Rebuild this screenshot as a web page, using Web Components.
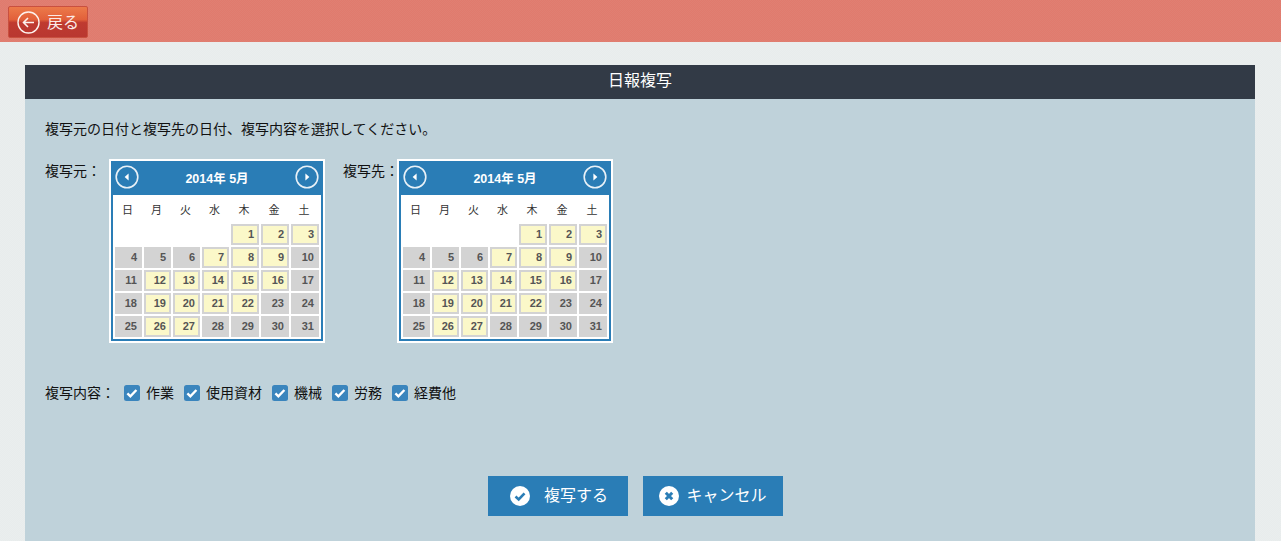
<!DOCTYPE html>
<html lang="ja">
<head>
<meta charset="utf-8">
<title>日報複写</title>
<style>
  html, body { margin: 0; padding: 0; }
  body {
    background: repeating-conic-gradient(#e8ecec 0 25%, #eaeeee 0 50%) 0 0 / 2px 2px;
    color: #111;
    font-family: "Noto Sans CJK JP", "Liberation Sans", sans-serif;
    font-size: 14px;
    height: 541px;
    overflow: hidden;
  }
</style>
</head>
<body>
<top-bar></top-bar>
<copy-panel title="日報複写">
  <p slot="lead">複写元の日付と複写先の日付、複写内容を選択してください。</p>
  <cal-field slot="cals" label="複写元：" width="64"></cal-field>
  <cal-field slot="cals" label="複写先：" width="54"></cal-field>
  <span slot="opts-label">複写内容：</span>
  <check-item slot="opts">作業</check-item>
  <check-item slot="opts">使用資材</check-item>
  <check-item slot="opts">機械</check-item>
  <check-item slot="opts">労務</check-item>
  <check-item slot="opts">経費他</check-item>
  <action-button slot="actions" icon="ok">複写する</action-button>
  <action-button slot="actions" icon="no">キャンセル</action-button>
</copy-panel>

<script>
class TopBar extends HTMLElement {
  constructor() {
    super();
    this.attachShadow({mode: 'open'}).innerHTML = `
<style>
  /* the bar has a very fine dot texture in the reference */
  :host { display: flex; align-items: center; height: 42px; background: repeating-conic-gradient(#e17a6d 0 25%, #df8073 0 50%) 0 0 / 2px 2px; padding: 2px 0 0 8px; box-sizing: border-box; }
  button {
    display: flex; align-items: center; width: 80px; height: 32px; padding: 0 0 0 8px; box-sizing: border-box;
    border: 1px solid #c9503f; border-radius: 2px; color: #fbeae6; font: inherit; font-size: 16px;
    background: linear-gradient(#ec7a4a 0%, #e2603a 42%, #bf3a30 52%, #b93730 100%);
  }
  svg { margin-right: 7px; }
  span { margin-top: -2px; }
</style>
<button>
  <svg width="23" height="23" viewBox="0 0 23 23" fill="none" stroke="#fdf2ee">
    <circle cx="11.5" cy="11.5" r="10.5" stroke-width="1.4"/>
    <path d="M17 11.5H6.5M11 7l-4.5 4.5L11 16" stroke-width="1.6"/>
  </svg><span>戻る</span>
</button>`;
  }
}

class CopyPanel extends HTMLElement {
  constructor() {
    super();
    const title = this.getAttribute('title');
    this.attachShadow({mode: 'open'}).innerHTML = `
<style>
  :host { display: block; margin: 23px 26px 0 25px; background: #bfd2da; height: 476px; }
  header { height: 34px; line-height: 29px; background: #323a46; color: #fff; text-align: center; font-size: 16px; }
  .body { padding: 20px 20px 0; }
  ::slotted(p) { margin: 0; line-height: 18px; font-size: 14px; }
  .cals { display: flex; gap: 18px; margin-top: 22px; }
  .opts { display: flex; align-items: center; margin-top: 40px; height: 20px; }
  .opts-label { width: 79px; margin-top: -3px; }
  .items { display: flex; gap: 10px; }
  .actions { display: flex; justify-content: center; gap: 15px; margin-top: 73px; padding-right: 9px; }
</style>
<header>${title}</header>
<div class="body">
  <slot name="lead"></slot>
  <div class="cals"><slot name="cals"></slot></div>
  <div class="opts">
    <div class="opts-label"><slot name="opts-label"></slot></div>
    <div class="items"><slot name="opts"></slot></div>
  </div>
  <div class="actions"><slot name="actions"></slot></div>
</div>`;
  }
}

class CalField extends HTMLElement {
  constructor() {
    super();
    this.attachShadow({mode: 'open'}).innerHTML = `
<style>
  :host { display: flex; align-items: flex-start; }
  .label { width: ${this.getAttribute('width')}px; line-height: 18px; margin-top: 2px; white-space: nowrap; }
</style>
<div class="label">${this.getAttribute('label')}</div>
<month-cal></month-cal>`;
  }
}

class MonthCal extends HTMLElement {
  constructor() {
    super();
    // 2014年5月 is fixed, the days that can be picked are the yellow ones
    const open = [1, 2, 3, 7, 8, 9, 12, 13, 14, 15, 16, 19, 20, 21, 22, 26, 27];
    const heads = ['日', '月', '火', '水', '木', '金', '土'].map(d => `<div class="dow">${d}</div>`).join('');
    let cells = '<div></div>'.repeat(4);
    for (let d = 1; d <= 31; d++) {
      cells += `<div class="day ${open.includes(d) ? 'on' : ''}">${d}</div>`;
    }
    const arrow = p => `<svg width="24" height="24" viewBox="0 0 24 24"><circle cx="12" cy="12" r="10.8" fill="none" stroke="#e8f1f7" stroke-width="1.6"/><path d="${p}" fill="#fff"/></svg>`;
    this.attachShadow({mode: 'open'}).innerHTML = `
<style>
  :host { display: block; width: 216px; height: 184px; box-sizing: border-box; border: 2px solid #fff; background: #fff; }
  .frame { height: 180px; box-sizing: border-box; border: 2px solid #2a7db6; border-top: 0; background: #fff; }
  .head { display: flex; align-items: center; justify-content: space-between; height: 34px; box-sizing: border-box; margin: 0 -2px; padding: 0 4px 2px 4px; background: #2a7db6; color: #fff; font: bold 12.5px "Liberation Sans", "Noto Sans CJK JP", sans-serif; }
  .head svg { display: block; }
  .grid { display: grid; grid-template-columns: 27px 27px 27px 27px 28px 28px 28px; column-gap: 2px; row-gap: 2px; margin-left: 2px; }
  .dow { height: 27px; line-height: 28px; padding-right: 2px; text-align: center; font-size: 11px; color: #333; }
  .grid > div:not(.dow) { height: 21px; }
  .day { box-sizing: border-box; padding-right: 5px; text-align: right; font: bold 11px/21px "Liberation Sans", sans-serif; color: #555; background: #d3d3d3; }
  .day.on { background: #fbf8c9; border: 2px solid #d3d3d3; padding-right: 3px; line-height: 17px; }
</style>
<div class="frame">
  <div class="head">${arrow('M13.6 8.6v6.8L9.6 12z')}<span>2014年 5月</span>${arrow('M10.4 8.6v6.8l4-3.4z')}</div>
  <div class="grid">${heads}${cells}</div>
</div>`;
  }
}

class CheckItem extends HTMLElement {
  constructor() {
    super();
    this.attachShadow({mode: 'open'}).innerHTML = `
<style>
  :host { display: inline-flex; align-items: center; gap: 6px; height: 20px; }
  svg { display: block; }
  span { margin-top: -3px; }
</style>
<svg width="16" height="16" viewBox="0 0 16 16">
  <rect width="16" height="16" rx="2.5" fill="#3a85bd"/>
  <path d="M3.4 8.4l3 3 6-6.4" fill="none" stroke="#fff" stroke-width="2.4"/>
</svg>
<span><slot></slot></span>`;
  }
}

class ActionButton extends HTMLElement {
  constructor() {
    super();
    const ok = this.getAttribute('icon') === 'ok';
    const glyph = ok
      ? '<path d="M5.5 10.5l3.2 3 5.8-6.2" fill="none" stroke="#2a7db6" stroke-width="2.6"/>'
      : '<path d="M6.8 6.8l6.4 6.4M13.2 6.8l-6.4 6.4" fill="none" stroke="#2a7db6" stroke-width="3"/>';
    this.attachShadow({mode: 'open'}).innerHTML = `
<style>
  :host { display: flex; align-items: center; justify-content: center; width: 140px; height: 40px; box-sizing: border-box; padding-left: ${ok ? 2 : 0}px; background: #2a7db6; color: #fff; font-size: 16px; gap: ${ok ? 14 : 7}px; }
  svg { display: block; }
  span { margin-top: -4px; }
</style>
<svg width="20" height="20" viewBox="0 0 20 20"><circle cx="10" cy="10" r="10" fill="#fff"/>${glyph}</svg>
<span><slot></slot></span>`;
  }
}

customElements.define('top-bar', TopBar);
customElements.define('copy-panel', CopyPanel);
customElements.define('cal-field', CalField);
customElements.define('month-cal', MonthCal);
customElements.define('check-item', CheckItem);
customElements.define('action-button', ActionButton);
</script>
</body>
</html>
